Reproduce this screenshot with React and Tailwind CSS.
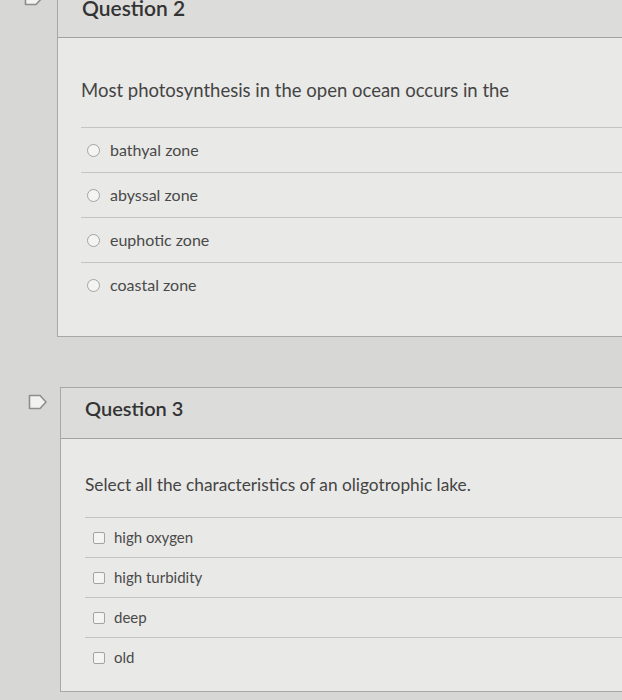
import React from 'react';

const q2Options = ['bathyal zone', 'abyssal zone', 'euphotic zone', 'coastal zone'];
const q3Options = ['high oxygen', 'high turbidity', 'deep', 'old'];

function FlagIcon() {
  return (
    <svg width="20" height="16" viewBox="0 0 20 16" className="shrink-0">
      <path d="M1.5 1.5 H12 L18 8 L12 14.5 H1.5 Z" fill="#f2f2f0" stroke="#8d8d8b" strokeWidth="1.6" strokeLinejoin="round" />
    </svg>
  );
}

function Radio() {
  return <span className="inline-block h-[13px] w-[13px] shrink-0 rounded-full border border-[#a3a3a1] bg-[#f4f4f2]" />;
}

function Check() {
  return <span className="inline-block h-[12px] w-[12px] shrink-0 rounded-[2px] border border-[#a3a3a1] bg-[#f4f4f2]" />;
}

export default function App() {
  return (
    <div className="h-[700px] w-[622px] overflow-hidden bg-[#d7d7d5] font-['Lato',sans-serif] text-[#404040]">
      {/* Question 2 */}
      <div className="relative -mt-[22px] flex">
        <div className="w-[57px] shrink-0 pl-[24px] pt-[12px]">
          <FlagIcon />
        </div>
        <div className="w-[580px] shrink-0 border border-[#a8a8a6] bg-[#e9e9e7]">
          <div className="flex h-[59px] items-center border-b border-[#a3a3a1] bg-[#dcdcda] pl-[24px] text-[21px] font-semibold text-[#333]">
            Question 2
          </div>
          <div className="pb-[29px] pl-[23px] pt-[40px]">
            <p className="text-[18.5px] leading-[24px] text-[#444]">Most photosynthesis in the open ocean occurs in the</p>
            <div className="mt-[25px]">
              {q2Options.map((o) => (
                <div key={o} className="flex h-[45px] items-center gap-[10px] border-t border-[#c4c4c2] pl-[6px] text-[16px] text-[#4a4a4a]">
                  <Radio />
                  <span>{o}</span>
                </div>
              ))}
            </div>
          </div>
        </div>
      </div>

      {/* Question 3 */}
      <div className="mt-[50px] flex">
        <div className="flex w-[60px] shrink-0 items-start pl-[28px] pt-[7px]">
          <FlagIcon />
        </div>
        <div className="w-[580px] shrink-0 border border-[#a8a8a6] bg-[#e9e9e7]">
          <div className="flex h-[51px] items-start border-b border-[#a3a3a1] bg-[#dcdcda] pl-[24px] pt-[5px] text-[20px] font-semibold text-[#333]">
            Question 3
          </div>
          <div className="pb-[14px] pl-[24px] pt-[34px]">
            <p className="text-[17.3px] leading-[24px] text-[#444]">Select all the characteristics of an oligotrophic lake.</p>
            <div className="mt-[20px]">
              {q3Options.map((o) => (
                <div key={o} className="flex h-[40px] items-center gap-[9px] border-t border-[#c4c4c2] pl-[8px] text-[15px] text-[#4a4a4a]">
                  <Check />
                  <span>{o}</span>
                </div>
              ))}
            </div>
          </div>
        </div>
      </div>
    </div>
  );
}
